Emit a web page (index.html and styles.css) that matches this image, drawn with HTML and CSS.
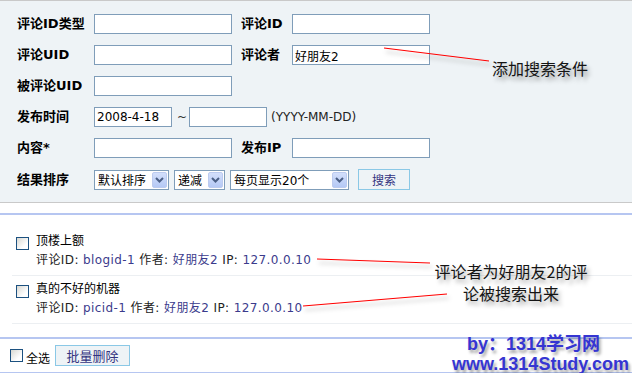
FILE: index.html
```html
<!DOCTYPE html>
<html lang="zh-CN">

<head>
  <meta charset="UTF-8">
  <title>评论管理</title>
  <link rel="stylesheet" href="styles.css">
</head>

<body>
  <div class="page">
    <form class="search">
      <label>评论ID类型</label>
      <input class="text" type="text">
      <label class="side">评论ID</label>
      <input class="text" type="text">

      <label>评论UID</label>
      <input class="text" type="text">
      <label class="side">评论者</label>
      <input class="text" type="text" value="好朋友2">

      <label>被评论UID</label>
      <input class="text" type="text">
      <span></span>
      <span></span>

      <label>发布时间</label>
      <div class="wide date">
        <input class="text short" type="text" value="2008-4-18">
        <span class="tilde">~</span>
        <input class="text short" type="text">
        <span class="hint">(YYYY-MM-DD)</span>
      </div>

      <label>内容*</label>
      <input class="text" type="text">
      <label class="side">发布IP</label>
      <input class="text" type="text">

      <label>结果排序</label>
      <div class="wide sort">
        <div class="select s-order"><span>默认排序</span><span class="arrow"><svg width="9" height="6" viewBox="0 0 9 6"><path d="M1 1 L4.5 4.5 L8 1" fill="none" stroke="#4b5f86" stroke-width="2"/></svg></span></div>
        <div class="select s-dir"><span>递减</span><span class="arrow"><svg width="9" height="6" viewBox="0 0 9 6"><path d="M1 1 L4.5 4.5 L8 1" fill="none" stroke="#4b5f86" stroke-width="2"/></svg></span></div>
        <div class="select s-page"><span>每页显示20个</span><span class="arrow"><svg width="9" height="6" viewBox="0 0 9 6"><path d="M1 1 L4.5 4.5 L8 1" fill="none" stroke="#4b5f86" stroke-width="2"/></svg></span></div>
        <button class="btn search-btn" type="button">搜索</button>
      </div>
    </form>

    <ul class="list">
      <li class="item">
        <span class="check"></span>
        <div class="body">
          <div class="title">顶楼上额</div>
          <div class="meta">评论ID: <a>blogid-1</a> 作者: <a>好朋友2</a> IP: <a>127.0.0.10</a></div>
        </div>
      </li>
      <li class="item">
        <span class="check"></span>
        <div class="body">
          <div class="title">真的不好的机器</div>
          <div class="meta">评论ID: <a>picid-1</a> 作者: <a>好朋友2</a> IP: <a>127.0.0.10</a></div>
        </div>
      </li>
    </ul>

    <div class="footer">
      <span class="check"></span>
      <span class="all">全选</span>
      <button class="btn del-btn" type="button">批量删除</button>
    </div>

    <!-- annotations drawn over the screenshot -->
    <svg class="marks" width="632" height="373">
      <defs>
        <filter id="sh" x="-10%" y="-200%" width="130%" height="600%">
          <feDropShadow dx="2" dy="4" stdDeviation="2" flood-color="#000" flood-opacity="0.3"/>
        </filter>
      </defs>
      <g stroke="#f00" stroke-width="1.2" filter="url(#sh)">
        <line x1="384" y1="48" x2="489" y2="61"/>
        <line x1="317" y1="259" x2="430" y2="263"/>
        <line x1="303" y1="306" x2="447" y2="294"/>
      </g>
    </svg>
    <div class="note note-1">添加搜索条件</div>
    <div class="note note-2">
      <div>评论者为好朋友2的评</div>
      <div>论被搜索出来</div>
    </div>
    <div class="brand">
      <div class="by">by：1314学习网</div>
      <div>www.1314Study.com</div>
    </div>
  </div>
</body>

</html>
```

FILE: styles.css
```css
body {
  margin: 0;
  background: #fff;
  color: #000;
  font-family: "DejaVu Sans", "Noto Sans CJK SC", sans-serif;
  font-size: 12px;
}

.page {
  height: 373px;
  overflow: hidden;
  position: relative;
  width: 632px;
}

.search {
  align-items: center;
  background: #eef3f6;
  border-bottom: 1px solid #c9c9c9;
  border-top: 1px solid #c9c9c9;
  display: grid;
  grid-template-columns: 77px 147px 51px 138px;
  margin: 0;
  padding: 13px 0 12px 17px;
  row-gap: 11px;
}

.search label {
  font-family: "DejaVu Sans", "Noto Sans CJK SC", sans-serif;
  font-size: 13px;
  font-weight: 700;
  line-height: 16px;
  white-space: nowrap;
}

.text {
  background: #fff;
  border: 1px solid #7f9db9;
  box-sizing: border-box;
  font-family: "DejaVu Sans", "Noto Sans CJK SC", sans-serif;
  font-size: 12px;
  height: 20px;
  margin: 0;
  outline: none;
  padding: 0 2px;
  width: 138px;
}

.wide {
  align-items: center;
  display: flex;
  grid-column: 2 / -1;
}

.short {
  width: 78px;
}

.tilde {
  color: #333;
  margin: 0 2px 0 5px;
}

.hint {
  color: #222;
  margin-left: 4px;
}

.sort {
  gap: 5px;
}

.select {
  align-items: center;
  background: #fff;
  border: 1px solid #7f9db9;
  box-sizing: border-box;
  display: flex;
  height: 20px;
  justify-content: space-between;
  padding: 0 1px 0 3px;
}

.s-order {
  width: 75px;
}

.s-dir {
  width: 51px;
}

.s-page {
  width: 119px;
}

.arrow {
  align-items: center;
  background: linear-gradient(#d3dffb, #b5c9f5);
  border: 1px solid #bccbef;
  border-radius: 2px;
  box-sizing: border-box;
  display: flex;
  height: 16px;
  justify-content: center;
  width: 15px;
}

.btn {
  background: #eef3f6;
  border: 1px solid #8ac8e6;
  color: #33337f;
  cursor: pointer;
  font-family: "Noto Sans CJK SC", sans-serif;
  font-size: 12px;
  height: 21px;
  margin: 0;
  padding: 0;
}

.search-btn {
  margin-left: 4px;
  width: 52px;
}

.list {
  border-bottom: 2px solid #b6c6f1;
  border-top: 2px solid #b6c6f1;
  list-style: none;
  margin: 10px 0 0;
  padding: 13px 0 13px 12px;
}

.item {
  border-bottom: 1px solid #eceff2;
  display: flex;
  padding: 4px 0 5px 4px;
}

.check {
  background: linear-gradient(135deg, #d8d8d2, #fff 70%);
  border: 1px solid #1c5180;
  box-sizing: border-box;
  display: block;
  flex: none;
  height: 13px;
  width: 13px;
}

.item .check {
  margin-top: 5px;
}

.body {
  line-height: 19px;
  margin-left: 7px;
}

.meta {
  color: #222;
  letter-spacing: 0.4px;
}

.meta a {
  color: #3b3b8c;
}

.footer {
  align-items: center;
  border-bottom: 2px solid #b6c6f1;
  display: flex;
  height: 33px;
  padding-left: 10px;
}

.all {
  margin: 3px 5px 0 3px;
}

.del-btn {
  font-size: 13px;
  width: 75px;
}

.marks {
  left: 0;
  pointer-events: none;
  position: absolute;
  top: 0;
}

.note {
  color: #141414;
  font-family: "Noto Sans CJK SC", sans-serif;
  font-size: 16px;
  position: absolute;
  text-shadow: 3px 4px 4px rgba(0, 0, 0, 0.35);
}

.note-1 {
  left: 492px;
  line-height: 20px;
  top: 58px;
}

.note-2 {
  left: 426px;
  line-height: 22px;
  text-align: center;
  top: 260px;
  width: 170px;
}

.brand {
  color: #3535d2;
  font-family: "Liberation Sans", "Noto Sans CJK SC", sans-serif;
  font-size: 18px;
  font-weight: 700;
  left: 452px;
  line-height: 20px;
  position: absolute;
  text-shadow: 2px 3px 3px rgba(0, 0, 0, 0.35);
  top: 334px;
}

.by {
  padding-left: 15px;
}
```
